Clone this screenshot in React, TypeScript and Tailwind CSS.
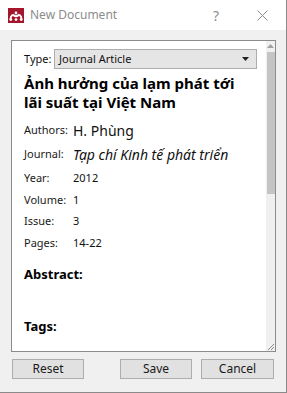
import React from 'react'

const font = { fontFamily: '"Noto Sans", "Open Sans", Arial, sans-serif' }

function Logo() {
  return (
    <svg width="16" height="15" viewBox="0 0 16 15" className="shrink-0">
      <rect width="16" height="15" fill="#a5152b" />
      <circle cx="8" cy="5" r="1.4" fill="#fff" />
      <path d="M2.5 11.5 C2.5 7 5 6.5 6 7.5 C7 8.5 9 8.5 10 7.5 C11 6.5 13.5 7 13.5 11.5" stroke="#fff" strokeWidth="1.8" fill="none" />
      <circle cx="2.8" cy="11.6" r="1.4" fill="#fff" />
      <circle cx="8" cy="11.6" r="1.4" fill="#fff" />
      <circle cx="13.2" cy="11.6" r="1.4" fill="#fff" />
    </svg>
  )
}

function Field({ label, children, h }: { label: string; children: React.ReactNode; h: string }) {
  return (
    <div className={`flex items-center ${h}`}>
      <span className="w-[49px] shrink-0 text-[11px] text-[#1a1a1a]">{label}</span>
      {children}
    </div>
  )
}

function Btn({ label, className = '' }: { label: string; className?: string }) {
  return (
    <button className={`h-[20px] w-[72px] border border-[#adadad] bg-[#e1e1e1] text-[12px] text-[#1a1a1a] flex items-center justify-center ${className}`}>
      {label}
    </button>
  )
}

export default function App() {
  return (
    <div style={font} className="w-[287px] h-[393px] flex flex-col border-r border-b border-[#8a8a8a] overflow-hidden">
      {/* Title bar */}
      <div className="h-[30px] bg-white flex items-center pl-[8px] shrink-0">
        <Logo />
        <span className="ml-[6px] text-[12px] text-[#8c8c8c]">New Document</span>
        <span className="ml-auto mr-[38px] text-[14px] text-[#8c8c8c]">?</span>
        <svg width="11" height="11" viewBox="0 0 11 11" className="mr-[18px]">
          <path d="M0.5 0.5 L10.5 10.5 M10.5 0.5 L0.5 10.5" stroke="#8c8c8c" strokeWidth="1" />
        </svg>
      </div>

      <div className="flex-1 bg-[#f0f0f0] flex flex-col">
        {/* Panel */}
        <div className="mt-[10px] ml-[11px] w-[265px] h-[312px] border border-[#8c8c8c] bg-white flex">
          <div className="flex-1 pl-[12px] pt-[8px] text-[#111]">
            <div className="flex items-center h-[20px]">
              <span className="w-[30px] text-[11px]">Type:</span>
              <div className="w-[203px] h-[20px] border border-[#adadad] bg-[#e5e5e5] flex items-center pl-[4px] pr-[7px]">
                <span className="text-[11px] flex-1">Journal Article</span>
                <svg width="7" height="4" viewBox="0 0 7 4"><path d="M0 0 L7 0 L3.5 4 Z" fill="#222" /></svg>
              </div>
            </div>
            <div className="mt-[5px] text-[15px] leading-[19px] font-bold text-black">
              Ảnh hưởng của lạm phát tới
              <br />
              lãi suất tại Việt Nam
            </div>
            <div className="mt-[7px]">
              <Field label="Authors:" h="h-[22px]">
                <span className="text-[14px]">H. Phùng</span>
              </Field>
              <Field label="Journal:" h="h-[26px]">
                <span className="text-[14px] italic">Tạp chí Kinh tế phát triển</span>
              </Field>
              <Field label="Year:" h="h-[22px]">
                <span className="text-[11px]">2012</span>
              </Field>
              <Field label="Volume:" h="h-[22px]">
                <span className="text-[11px]">1</span>
              </Field>
              <Field label="Issue:" h="h-[21px]">
                <span className="text-[11px]">3</span>
              </Field>
              <Field label="Pages:" h="h-[23px]">
                <span className="text-[11px]">14-22</span>
              </Field>
            </div>
            <div className="mt-[10px] h-[20px] flex items-center text-[13px] font-bold text-black">Abstract:</div>
            <div className="mt-[32px] h-[20px] flex items-center text-[13px] font-bold text-black">Tags:</div>
          </div>
          {/* Scrollbar */}
          <div className="w-[9px] bg-[#f0f0f0] flex flex-col items-center relative">
            <svg width="7" height="4" viewBox="0 0 7 4" className="mt-[3px]"><path d="M0 4 L3.5 0 L7 4 Z" fill="#a0a0a0" /></svg>
            <div className="mt-[4px] w-[8px] h-[142px] bg-[#c4c4c4]" />
            <svg width="6" height="6" viewBox="0 0 6 6" className="absolute bottom-[1px] right-[1px]">
              <path d="M0 6 L6 0 M3 6 L6 3" stroke="#8c8c8c" strokeWidth="1" />
            </svg>
          </div>
        </div>
        {/* Buttons */}
        <div className="mt-[7px] ml-[12px] flex">
          <Btn label="Reset" />
          <Btn label="Save" className="ml-[36px]" />
          <Btn label="Cancel" className="ml-[9px] w-[73px]" />
        </div>
      </div>
    </div>
  )
}
